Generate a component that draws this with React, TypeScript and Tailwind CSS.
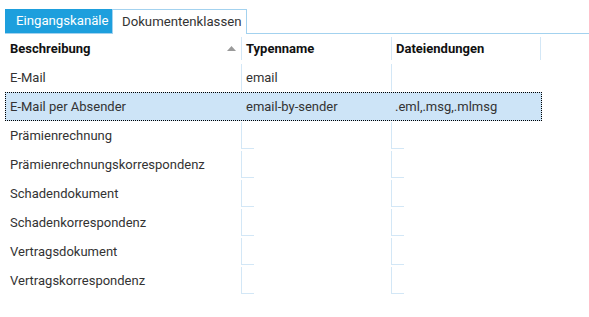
import { useState } from "react";

type Row = {
  name: string;
  type: string;
  ext: string;
};

const rows: Row[] = [
  { name: "E-Mail", type: "email", ext: "" },
  { name: "E-Mail per Absender", type: "email-by-sender", ext: ".eml,.msg,.mlmsg" },
  { name: "Prämienrechnung", type: "", ext: "" },
  { name: "Prämienrechnungskorrespondenz", type: "", ext: "" },
  { name: "Schadendokument", type: "", ext: "" },
  { name: "Schadenkorrespondenz", type: "", ext: "" },
  { name: "Vertragsdokument", type: "", ext: "" },
  { name: "Vertragskorrespondenz", type: "", ext: "" }
];

function Cell({ text, tick }: { text: string; tick: boolean }) {
  return (
    <div className="flex w-[150px] flex-col border-l border-[#d3e7f6]">
      <div className="flex flex-1 items-center pl-[4px]">{text}</div>
      {tick && <div className="h-px w-3 bg-[#d3e7f6]" />}
    </div>
  );
}

export default function App() {
  const [selected, setSelected] = useState(1);
  const tabs = ["Eingangskanäle", "Dokumentenklassen"];

  return (
    <div className="h-[317px] w-[589px] bg-white pl-[5px] pt-[9px] font-['Roboto',sans-serif] text-[13px] text-[#333]">
      <div className="flex h-[25px] border-b border-[#a3d2ef] text-[13.2px]">
        {tabs.map((t, i) =>
          i === 0 ? (
            <div key={t} className="flex w-[107px] items-center bg-[#1d9fdd] pl-[11px] text-white">
              {t}
            </div>
          ) : (
            <div
              key={t}
              className="-mb-px flex w-[135px] items-center border border-b-0 border-[#a3d2ef] bg-white pl-[9px] text-[#333]"
            >
              {t}
            </div>
          )
        )}
      </div>

      <div className="flex h-[29px] items-center font-bold text-[#111]">
        <div className="flex h-[23px] w-[236px] items-center justify-between pl-[5px] pr-[5px]">
          <span>Beschreibung</span>
          <svg width="9" height="5" viewBox="0 0 9 5" className="mt-[-1px]">
            <path d="M0 5 L4.5 0 L9 5 Z" fill="#9a9a9a" />
          </svg>
        </div>
        <div className="flex h-[23px] w-[150px] items-center border-l border-[#d3e7f6] pl-[4px]">Typenname</div>
        <div className="flex h-[23px] w-[150px] items-center border-x border-[#d3e7f6] pl-[4px]">Dateiendungen</div>
      </div>

      <div className="flex flex-col">
        {rows.map((r, i) => {
          const isSel = i === selected;
          return (
            <div
              key={r.name}
              onClick={() => setSelected(i)}
              className={
                isSel
                  ? "flex h-[29px] w-[537px] border border-dotted border-black bg-[#cde4f7]"
                  : "flex h-[29px] w-[537px] border border-transparent"
              }
            >
              <div className="flex w-[235px] items-center pl-[4px]">{r.name}</div>
              {isSel ? (
                <>
                  <div className="flex w-[150px] items-center pl-[5px]">{r.type}</div>
                  <div className="flex w-[150px] items-center pl-[4px]">{r.ext}</div>
                </>
              ) : (
                <>
                  <Cell text={r.type} tick={i > 1} />
                  <Cell text={r.ext} tick={i > 1} />
                </>
              )}
            </div>
          );
        })}
      </div>
    </div>
  );
}
